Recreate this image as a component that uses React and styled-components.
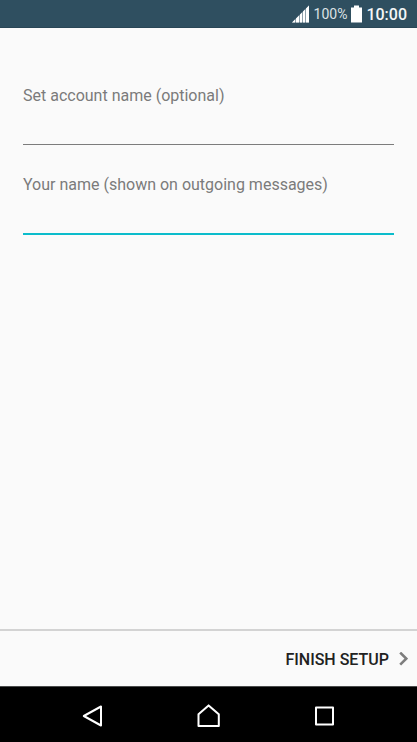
import React, { useState } from "react";
import styled, { createGlobalStyle } from "styled-components";

const GlobalStyle = createGlobalStyle`
  * {
    margin: 0;
    padding: 0;
    box-sizing: border-box;
  }

  body {
    background-color: #fafafa;
    font-family: Roboto, "Liberation Sans", sans-serif;
  }
`;

const Screen = styled.div`
  display: flex;
  flex-direction: column;
  min-height: 100vh;
`;

const StatusBar = styled.header`
  display: flex;
  justify-content: flex-end;
  align-items: center;
  gap: 4px;
  height: 28px;
  padding: 1px 10px 0 0;
  background-color: #2f4f60;
  border-bottom: 1px solid #294656;
  color: #f4f6f7;

  svg {
    display: block;
  }
`;

const Percent = styled.span`
  font-size: 14px;
  line-height: 20px;
  color: #dce2e5;
`;

const Clock = styled.time`
  padding-top: 1px;
  font-size: 16px;
  font-weight: 500;
  line-height: 20px;
`;

const Form = styled.form`
  display: flex;
  flex: 1;
  flex-direction: column;
`;

const Fields = styled.div`
  display: flex;
  flex: 1;
  flex-direction: column;
  gap: 30px;
  padding: 58px 23px 0;
`;

const Field = styled.div`
  display: flex;
  flex-direction: column;
`;

const Label = styled.label`
  font-size: 16px;
  line-height: 20px;
  color: #7b7b7b;
`;

const Input = styled.input`
  height: ${(props) => (props.$active ? "40px" : "39px")};
  padding-top: 8px;
  border: none;
  border-bottom: ${(props) =>
    props.$active ? "2px solid #0bbccb" : "1px solid #7c7c7c"};
  outline: none;
  background: transparent;
  color: #212121;
  font-family: inherit;
  font-size: 16px;
`;

const Footer = styled.div`
  display: flex;
  justify-content: flex-end;
  height: 57px;
  border-top: 2px solid #d3d3d3;
`;

const FinishButton = styled.button`
  display: flex;
  align-items: center;
  gap: 10px;
  padding: 1px 9px 0;
  border: none;
  background: transparent;
  color: #212121;
  font-family: inherit;
  font-size: 16px;
  font-weight: 500;
  cursor: pointer;
`;

const NavBar = styled.nav`
  display: grid;
  grid-template-columns: repeat(3, 1fr);
  height: 56px;
  padding: 0 34px;
  border-top: 1px solid #4a4c4c;
  background-color: #000;
`;

const NavButton = styled.button`
  display: flex;
  justify-content: center;
  align-items: center;
  padding-top: 3px;
  border: none;
  background: transparent;
  color: #fff;
  cursor: pointer;
`;

const SignalIcon = () => (
  <svg width="18" height="18" viewBox="0 0 18 18" aria-hidden="true">
    <path d="M0 17.5L17 0.5V17.5Z" fill="#8fa1ab" />
    <path
      d="M0 17.5L3 14.5V17.5ZM4 17.5V13.5L7 10.5V17.5ZM8 17.5V9.5L10 7.5V17.5ZM11 17.5V6.5L13 4.5V17.5ZM14 17.5V3.5L17 0.5V17.5Z"
      fill="#fff"
    />
  </svg>
);

const BatteryIcon = () => (
  <svg width="11" height="18" viewBox="0 0 11 18" aria-hidden="true">
    <path d="M3 0.5H8V2.5H11V17.5H0V2.5H3Z" fill="#fff" />
  </svg>
);

const ChevronIcon = () => (
  <svg width="9" height="14" viewBox="0 0 9 14" aria-hidden="true">
    <path
      d="M1.2 0.6L7.2 6.6L1.2 12.6"
      fill="none"
      stroke="#7d7d7d"
      strokeWidth="2.6"
    />
  </svg>
);

const NavIcon = ({ d }) => (
  <svg width="24" height="24" viewBox="0 0 24 24" aria-hidden="true">
    <path
      d={d}
      fill="none"
      stroke="currentColor"
      strokeWidth="2"
      strokeLinejoin="round"
    />
  </svg>
);

const navItems = [
  { label: "Back", d: "M21 2.5V21.5L3.8 12Z" },
  { label: "Home", d: "M2.5 22V10.3L12.6 1.4L22.8 10.3V22Z" },
  { label: "Recent apps", d: "M3 3.5H20V20.5H3Z" },
];

const App = () => {
  const [accountName, setAccountName] = useState("");
  const [name, setName] = useState("");
  const [active, setActive] = useState("name");

  return (
    <>
      <GlobalStyle />
      <Screen>
        <StatusBar>
          <SignalIcon />
          <Percent>100%</Percent>
          <BatteryIcon />
          <Clock>10:00</Clock>
        </StatusBar>
        <Form onSubmit={(e) => e.preventDefault()}>
          <Fields>
            <Field>
              <Label htmlFor="accountName">Set account name (optional)</Label>
              <Input
                id="accountName"
                type="text"
                value={accountName}
                $active={active === "accountName"}
                onFocus={() => setActive("accountName")}
                onChange={(e) => setAccountName(e.target.value)}
              />
            </Field>
            <Field>
              <Label htmlFor="name">Your name (shown on outgoing messages)</Label>
              <Input
                id="name"
                type="text"
                value={name}
                $active={active === "name"}
                onFocus={() => setActive("name")}
                onChange={(e) => setName(e.target.value)}
              />
            </Field>
          </Fields>
          <Footer>
            <FinishButton type="submit">
              FINISH SETUP
              <ChevronIcon />
            </FinishButton>
          </Footer>
        </Form>
        <NavBar>
          {navItems.map((item) => (
            <NavButton key={item.label} type="button" aria-label={item.label}>
              <NavIcon d={item.d} />
            </NavButton>
          ))}
        </NavBar>
      </Screen>
    </>
  );
};

export default App;
